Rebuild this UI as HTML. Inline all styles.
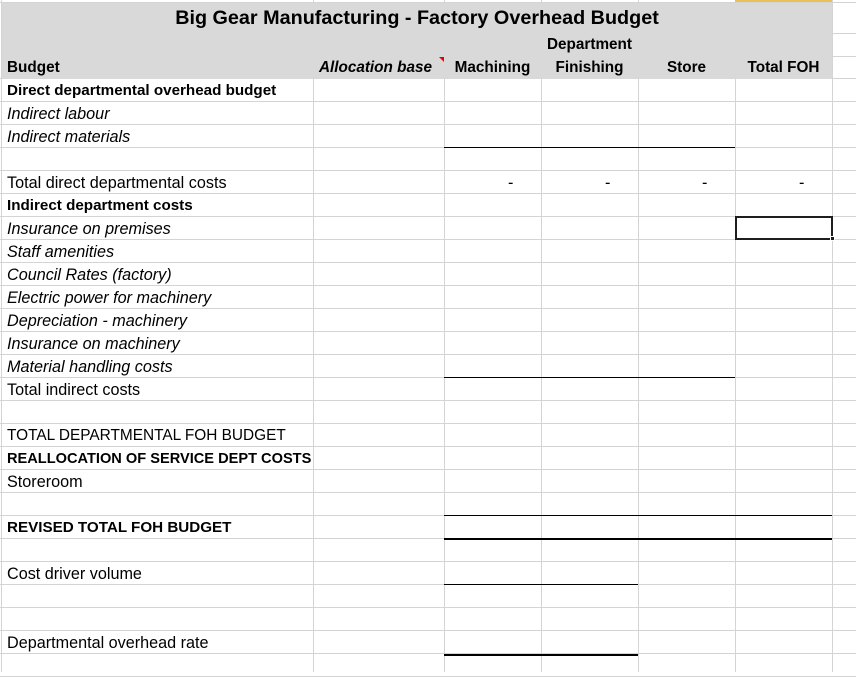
<!DOCTYPE html>
<html><head><meta charset="utf-8">
<style>
*{margin:0;padding:0;box-sizing:border-box}
body{width:856px;height:672px;overflow:hidden;background:#fff;position:relative;font-family:"Liberation Sans",Arial,sans-serif;font-size:16.2px;color:#000}
.grid{position:absolute;left:0;top:78px;width:856px;height:600px;background-image:repeating-linear-gradient(to bottom,#d4d4d4 0 1px,transparent 1px 23px)}
.v{position:absolute;top:0;height:672px;width:1px;background:#d4d4d4}
.hdr{position:absolute;left:2px;top:3px;width:830px;height:76px;background:#d9d9d9}
.hl{position:absolute;height:1px;background:#d4d4d4}
.t{position:absolute;white-space:nowrap;line-height:24px}
.b{font-weight:bold;font-size:15.2px}
.h{font-size:15.3px}
.i{font-style:italic}
.bl{position:absolute;background:#000}
</style></head><body>
<div class="grid"></div>
<div class="hl" style="left:0;top:2px;width:856px"></div>
<div class="hl" style="left:832px;top:33px;width:24px"></div>
<div class="hl" style="left:832px;top:56px;width:24px"></div>
<div class="v" style="left:1px"></div>
<div class="v" style="left:313px"></div>
<div class="v" style="left:444px"></div>
<div class="v" style="left:541px"></div>
<div class="v" style="left:638px"></div>
<div class="v" style="left:735px"></div>
<div class="v" style="left:832px"></div>
<div style="position:absolute;left:735px;top:0;width:97px;height:2px;background:#e8c15a"></div>
<div class="hdr"></div>
<div class="t b" style="left:2px;width:830px;text-align:center;top:6px;font-size:19.8px">Big Gear Manufacturing - Factory Overhead Budget</div>
<div class="t b h" style="left:541px;width:97px;text-align:center;top:33px">Department</div>
<div class="t b h" style="left:7px;top:56px">Budget</div>
<div class="t b h i" style="left:313px;width:119px;text-align:right;top:56px">Allocation base</div>
<div style="position:absolute;left:439px;top:57px;width:0;height:0;border-left:5px solid transparent;border-top:5px solid #e00"></div>
<div class="t b h" style="left:444px;width:97px;text-align:center;top:56px">Machining</div>
<div class="t b h" style="left:541px;width:97px;text-align:center;top:56px">Finishing</div>
<div class="t b h" style="left:638px;width:97px;text-align:center;top:56px">Store</div>
<div class="t b h" style="left:735px;width:97px;text-align:center;top:56px">Total FOH</div>

<div class="t b" style="left:7px;top:79px">Direct departmental overhead budget</div>
<div class="t i" style="left:7px;top:102px">Indirect labour</div>
<div class="t i" style="left:7px;top:125px">Indirect materials</div>
<div class="t" style="left:7px;top:171px">Total direct departmental costs</div>
<div class="t" style="left:508px;top:171px">-</div>
<div class="t" style="left:605px;top:171px">-</div>
<div class="t" style="left:702px;top:171px">-</div>
<div class="t" style="left:799px;top:171px">-</div>
<div class="t b" style="left:7px;top:194px">Indirect department costs</div>
<div class="t i" style="left:7px;top:217px">Insurance on premises</div>
<div class="t i" style="left:7px;top:240px">Staff amenities</div>
<div class="t i" style="left:7px;top:263px">Council Rates (factory)</div>
<div class="t i" style="left:7px;top:286px">Electric power for machinery</div>
<div class="t i" style="left:7px;top:309px">Depreciation - machinery</div>
<div class="t i" style="left:7px;top:332px">Insurance on machinery</div>
<div class="t i" style="left:7px;top:355px">Material handling costs</div>
<div class="t" style="left:7px;top:378px">Total indirect costs</div>
<div class="t" style="left:7px;top:424px;font-size:15.4px">TOTAL DEPARTMENTAL FOH BUDGET</div>
<div class="t b" style="left:7px;top:447px;font-size:14.6px">REALLOCATION OF SERVICE DEPT COSTS</div>
<div class="t" style="left:7px;top:470px">Storeroom</div>
<div class="t b" style="left:7px;top:516px">REVISED TOTAL FOH BUDGET</div>
<div class="t" style="left:7px;top:562px">Cost driver volume</div>
<div class="t" style="left:7px;top:631px">Departmental overhead rate</div>

<div class="bl" style="left:444px;top:147px;width:291px;height:1px"></div>
<div class="bl" style="left:444px;top:377px;width:291px;height:1px"></div>
<div class="bl" style="left:444px;top:515px;width:388px;height:1px"></div>
<div class="bl" style="left:444px;top:538px;width:388px;height:2px"></div>
<div class="bl" style="left:444px;top:584px;width:194px;height:1px"></div>
<div class="bl" style="left:444px;top:654px;width:194px;height:2px"></div>

<div style="position:absolute;left:735px;top:216px;width:98px;height:24px;border:2px solid #1e1e1e"></div>
<div style="position:absolute;left:830px;top:236px;width:5px;height:5px;background:#1e1e1e;border:1px solid #fff"></div>
</body></html>
